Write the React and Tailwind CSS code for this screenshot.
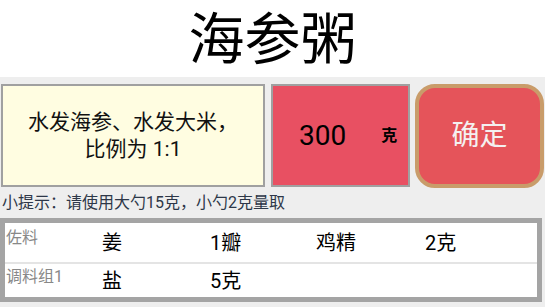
export default function App() {
  const font = { fontFamily: '"Roboto", "Noto Sans CJK SC", sans-serif' };
  return (
    <div className="w-[545px] h-[307px] bg-[#eeeeee] overflow-hidden flex flex-col" style={font}>
      <div className="h-[77px] bg-white flex items-center justify-center pt-[2px]">
        <span className="text-[56px] leading-none text-black">海参粥</span>
      </div>
      <div className="flex pt-[7px] pl-[1px] h-[110px]">
        <div className="w-[264px] h-[103px] border-2 border-[#a0a0a0] bg-[#fffde1] flex items-center justify-center text-center">
          <span className="text-[21px] leading-[27px] text-[#111]">水发海参、水发大米，<br />比例为 1:1</span>
        </div>
        <div className="ml-[6px] w-[139px] h-[103px] border-2 border-[#a0a0a0] bg-[#e85062] flex items-center">
          <span className="ml-[26px] text-[28px] text-black">300</span>
          <span className="ml-[35px] text-[16px] font-bold text-black">克</span>
        </div>
        <div className="ml-[5px] w-[129px] h-[104px] rounded-[20px] border-[4px] border-[#c99c6a] bg-[#e5545a] flex items-center justify-center">
          <span className="text-[28px] text-[#f4f0f0]">确定</span>
        </div>
      </div>
      <div className="h-[31px] pl-[2px] flex items-center">
        <span className="text-[16px] text-[#2d3748]">小提示：请使用大勺15克，小勺2克量取</span>
      </div>
      <div className="w-[542px] border-[5px] border-[#a4a4a4] bg-white">
        <div className="flex h-[41px] border-b-2 border-[#e4e4e4]">
          <div className="w-[97px] pl-[1px] pt-[3px] text-[16px] text-[#888]">佐料</div>
          <div className="w-[108px] flex items-center text-[20px] text-black">姜</div>
          <div className="w-[106px] flex items-center text-[20px] text-black">1瓣</div>
          <div className="w-[109px] flex items-center text-[20px] text-black">鸡精</div>
          <div className="flex-1 flex items-center text-[20px] text-black">2克</div>
        </div>
        <div className="flex h-[33px]">
          <div className="w-[97px] pl-[1px] pt-[1px] text-[16px] text-[#888]">调料组1</div>
          <div className="w-[108px] flex items-center text-[20px] text-black">盐</div>
          <div className="w-[106px] flex items-center text-[20px] text-black">5克</div>
          <div className="flex-1" />
        </div>
      </div>
    </div>
  );
}
